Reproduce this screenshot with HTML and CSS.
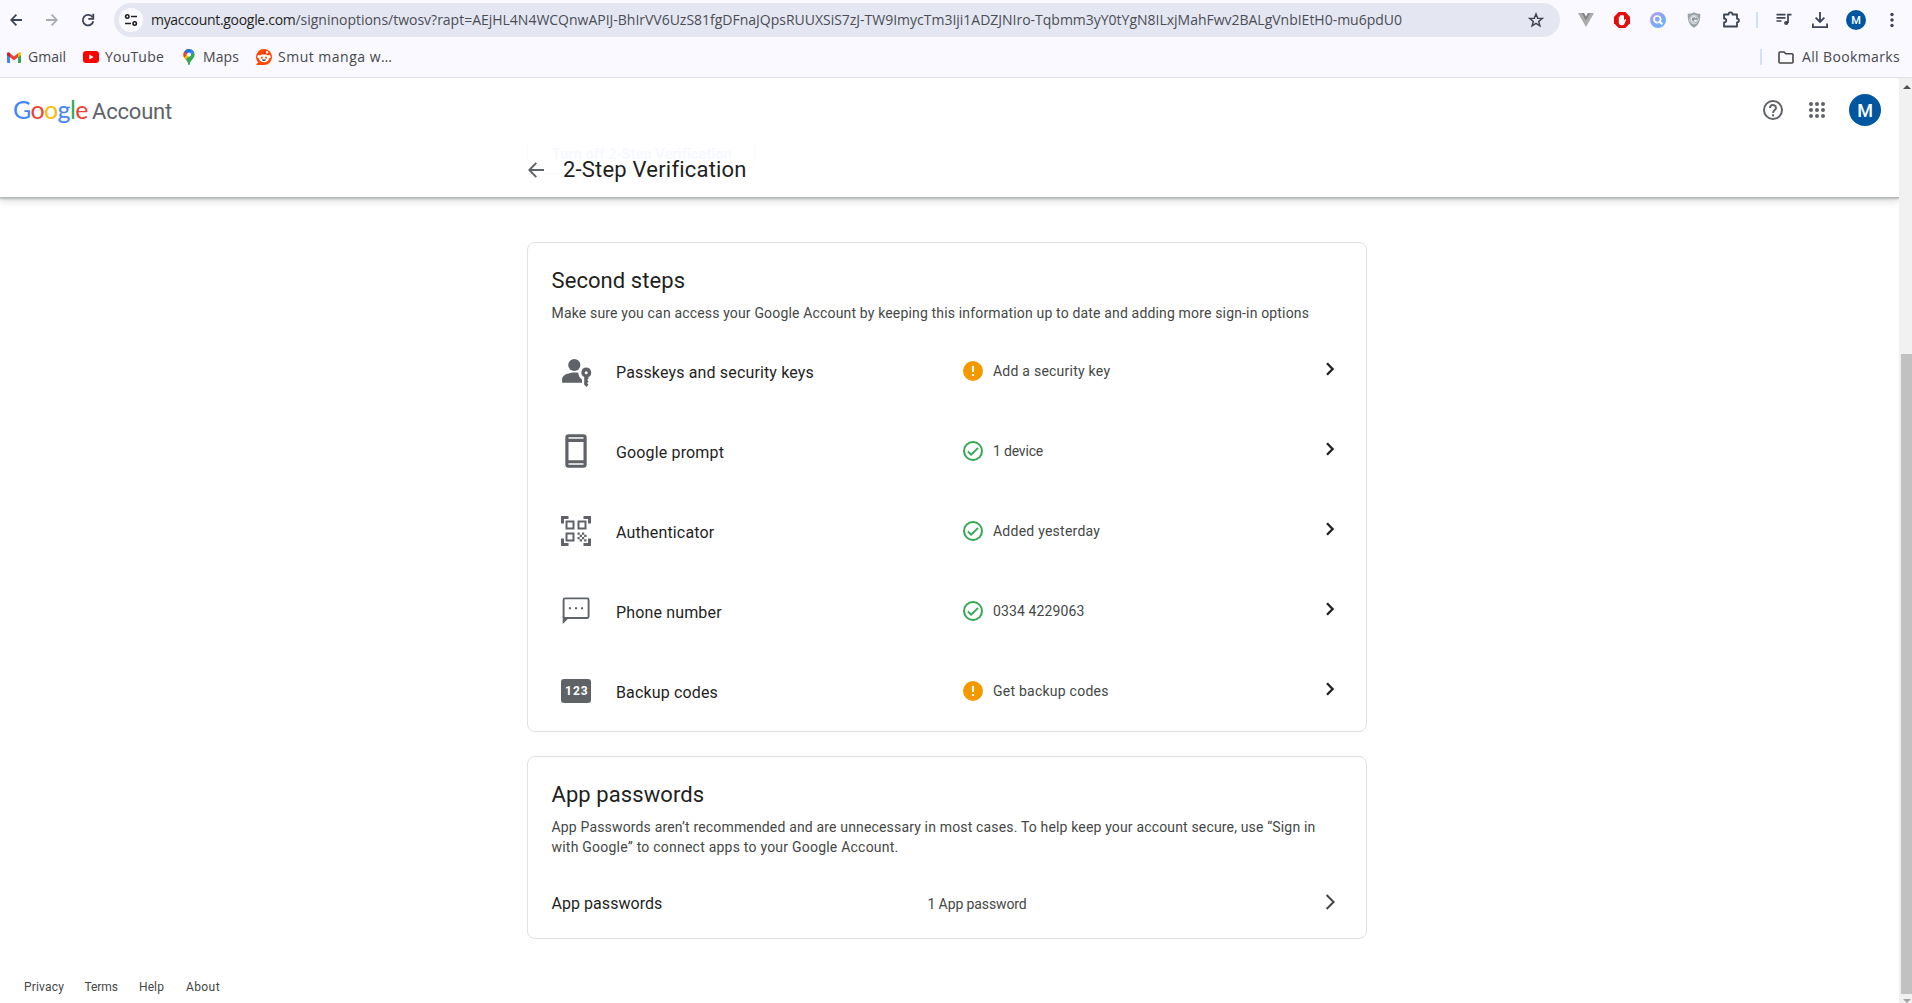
FILE: index.html
```html
<!DOCTYPE html>
<html lang="en">
<head>
<meta charset="utf-8">
<title>2-Step Verification</title>
<link rel="stylesheet" href="styles.css">
</head>
<body>
<svg class="defs" width="0" height="0" aria-hidden="true">
  <defs>
    <symbol id="warn" viewBox="0 0 20 20"><circle cx="10" cy="10" r="10" fill="#f29900"/><path d="M9 5h2v6H9zM9 13h2v2H9z" fill="#fff"/></symbol>
    <symbol id="ok" viewBox="0 0 20 20"><circle cx="10" cy="10" r="9" fill="none" stroke="#34a853" stroke-width="2"/><path d="M4.9 10.4l3.3 3.3 6.9-6.9" fill="none" stroke="#34a853" stroke-width="1.9"/></symbol>
    <symbol id="chev" viewBox="0 0 12 16"><path d="M3 2.2l5.6 5.8L3 13.8" fill="none" stroke="#202124" stroke-width="2.3"/></symbol>
  </defs>
</svg>

<div class="browser">
  <div class="toolbar">
    <svg class="nav" width="96" height="24" viewBox="0 0 96 24" fill="none" stroke-width="1.8">
      <path d="M12 12H1.4M6.4 6.6L1.2 12l5.2 5.4" stroke="#3c4356"/>
      <path d="M36 12h10.600M41.600 6.600L46.800 12l-5.200 5.400" stroke="#a9abb3"/>
      <path d="M82.600 9.300A5.300 5.300 0 1 0 83.300 13.200" stroke="#3c4356"/><path d="M83.300 5.800v5h-5" stroke="#3c4356"/>
    </svg>
    <div class="omnibox">
      <span class="tune"><svg width="14" height="14" viewBox="0 0 14 14" fill="none" stroke="#1f2026" stroke-width="1.6"><circle cx="3.300" cy="3.500" r="1.700"/><path d="M7 3.500h6M1 10.500h6"/><circle cx="10.700" cy="10.500" r="1.700"/></svg></span>
      <span class="url"><span class="host">myaccount.google.com</span><span class="path">/signinoptions/twosv?rapt=AEjHL4N4WCQnwAPIJ-BhIrVV6UzS81fgDFnaJQpsRUUXSiS7zJ-TW9ImycTm3Iji1ADZJNIro-Tqbmm3yY0tYgN8ILxjMahFwv2BALgVnbIEtH0-mu6pdU0</span></span>
      <svg class="star" width="16" height="16" viewBox="0 0 16 16"><path d="M8 2l1.700 4.200 4.500.3-3.500 2.900 1.200 4.400L8 11.400l-3.900 2.400 1.200-4.400L1.800 6.500l4.500-.3z" fill="none" stroke="#43454f" stroke-width="1.500"/></svg>
    </div>
    <div class="tools">
      <svg width="16" height="16" viewBox="0 0 16 16"><path d="M0 1h3.300L8 9.200 12.700 1H16L8 15z" fill="#ababab"/><path d="M3.300 1H6l2 3.400L10 1h2.700L8 9.200z" fill="#858585"/></svg>
      <svg width="16" height="16" viewBox="0 0 16 16"><path d="M4.700 0h6.600L16 4.700v6.600L11.300 16H4.700L0 11.300V4.700z" fill="#e40d0d"/><path d="M4.800 8V5c0-.8 1.200-.8 1.200 0V4c0-.9 1.300-.9 1.300 0v-.5c0-1 1.400-1 1.400 0V4c0-.9 1.300-.9 1.300 0v4.500l1-1.200c.6-.6 1.400 0 1.100.7L10.300 12c-.4.800-1 1.200-2 1.200H7.500c-1.700 0-2.700-1.200-2.700-2.700z" fill="#fff"/></svg>
      <svg width="16" height="16" viewBox="0 0 16 16"><defs><linearGradient id="lens" x1="0" y1="0" x2="1" y2="1"><stop offset="0" stop-color="#c59cf5"/><stop offset=".5" stop-color="#83a8f8"/><stop offset="1" stop-color="#5bb8fa"/></linearGradient></defs><circle cx="8" cy="8" r="8" fill="url(#lens)"/><circle cx="7.300" cy="7.300" r="3.300" fill="none" stroke="#fff" stroke-width="1.700"/><path d="M9.700 9.700l2.600 2.600" stroke="#fff" stroke-width="2"/></svg>
      <svg width="16" height="16" viewBox="0 0 16 16"><path d="M8 .2c2 1.200 4 1.400 6.300 1.500 0 6-.8 11-6.300 14.100C2.500 12.700 1.700 7.700 1.700 1.700 4 1.600 6 1.400 8 .2z" fill="#9ba1a8"/><circle cx="8" cy="7.500" r="4.300" fill="#8e949d" stroke="#dfe2e5"/><path d="M10.300 5.800a2.800 2.800 0 1 0 .3 2.500H8" fill="none" stroke="#edf0f2" stroke-width="1.200"/></svg>
      <svg width="18" height="18" viewBox="0 0 18 18"><path d="M2 3.500h4.500c0-2.800 4-2.800 4 0H15v4.200c2.500.1 2.500 3.500 0 3.600v4.200H2v-4c3-.3 3-3.700 0-4z" fill="none" stroke="#3c4356" stroke-width="1.800" stroke-linejoin="round"/></svg>
      <i class="bar"></i>
      <svg class="media" width="16" height="16" viewBox="0 0 16 16" fill="none" stroke="#3c4356" stroke-width="1.700"><path d="M.500 2.700h9M.500 5.800h9M.500 9h5"/><path d="M12 11V2.700h3.500"/><circle cx="10.200" cy="11" r="2.100" fill="#3c4356" stroke="none"/></svg>
      <svg width="16" height="16" viewBox="0 0 16 16" fill="none" stroke="#3c4356" stroke-width="1.800"><path d="M8 0v9.500M3.600 5.600L8 10l4.400-4.400M.9 11.500v3.600h14.200v-3.600"/></svg>
      <span class="mini">M</span>
      <svg class="more" width="6" height="16" viewBox="0 0 6 16" fill="#3c4356"><circle cx="3" cy="2.500" r="1.700"/><circle cx="3" cy="8" r="1.700"/><circle cx="3" cy="13.500" r="1.700"/></svg>
    </div>
  </div>
  <div class="bookmarks">
    <a class="bm gmail"><svg width="14" height="11" viewBox="0 0 14 11"><path d="M0 1.500h3V11H1a1 1 0 0 1-1-1z" fill="#4285f4"/><path d="M11 1.500h3V10a1 1 0 0 1-1 1h-2z" fill="#34a853"/><path d="M3 1.300L7 4.400l4-3.100v4L7 8.400 3 5.300z" fill="#ea4335"/><path d="M0 2C0 .2 1.700-.3 3 .9V5.300L0 3.200z" fill="#c5221f"/><path d="M14 2c0-1.800-1.700-2.300-3-1.100v4.400l3-2.100z" fill="#fbbc04"/></svg><span>Gmail</span></a>
    <a class="bm yt"><svg width="16" height="12" viewBox="0 0 16 12"><rect width="16" height="12" rx="3" fill="#f00"/><path d="M6.300 3.500L10.700 6 6.300 8.500z" fill="#fff"/></svg><span>YouTube</span></a>
    <a class="bm maps"><svg width="12" height="16" viewBox="0 0 12 16"><defs><clipPath id="pin"><path d="M6 0a5.600 5.600 0 0 1 5.600 5.600C11.600 9.800 7.500 11 6.700 15.400c-.2.800-1.200.8-1.400 0C4.500 11 .4 9.800.4 5.600A5.600 5.600 0 0 1 6 0z"/></clipPath></defs><g clip-path="url(#pin)"><path d="M0 0h12v16H0z" fill="#34a853"/><path d="M0 0h12L3.500 10 0 12z" fill="#fbbc04"/><path d="M0 0h7L2.500 7.500 0 9z" fill="#ea4335"/><path d="M2 0h10v3L6 6 1.700 2.400z" fill="#1a73e8"/><path d="M8.500.5L12 3 7 6z" fill="#4285f4"/></g><circle cx="6" cy="5.600" r="2.100" fill="#fff"/></svg><span>Maps</span></a>
    <a class="bm reddit"><svg width="16" height="16" viewBox="0 0 16 16"><path d="M8 0a8 8 0 1 1 0 16H.8c-.5 0-.7-.6-.3-.9L2.300 13.500A8 8 0 0 1 8 0z" fill="#ff4500"/><circle cx="2.900" cy="7.600" r="1.600" fill="#fff"/><circle cx="13.100" cy="7.600" r="1.600" fill="#fff"/><ellipse cx="8" cy="9.200" rx="5.100" ry="4" fill="#fff"/><circle cx="11" cy="3.300" r="1.200" fill="#fff"/><path d="M8 5.500c0-1.500.8-2.300 2.200-2.300" fill="none" stroke="#842123" stroke-width=".7"/><ellipse cx="5.900" cy="8.700" rx=".9" ry="1.100" fill="#ff4500"/><ellipse cx="10.100" cy="8.700" rx=".9" ry="1.100" fill="#ff4500"/><path d="M5.900 10.600h4.200c-.5 1.900-3.700 1.900-4.200 0z" fill="#1c2a33"/></svg><span>Smut manga w…</span></a>
    <a class="bm all"><i class="bar"></i><svg width="16" height="13" viewBox="0 0 16 13"><path d="M1 2.200C1 1.400 1.400 1 2 1h4l1.800 1.800H14c.6 0 1 .4 1 1V11c0 .6-.4 1-1 1H2c-.6 0-1-.4-1-1z" fill="none" stroke="#474747" stroke-width="1.600"/></svg><span>All Bookmarks</span></a>
  </div>
</div>

<div class="viewport">
  <div class="page">
    <header class="header">
      <div class="topbar">
        <div class="brand"><span class="logo"><span class="b">G</span><span class="r">o</span><span class="y">o</span><span class="b">g</span><span class="g">l</span><span class="r">e</span></span><span class="product">Account</span></div>
        <div class="actions">
          <svg width="20" height="20" viewBox="0 0 20 20"><circle cx="10" cy="10" r="9" fill="none" stroke="#5f6368" stroke-width="2"/><path d="M7 8c0-4 6-4 6-.1 0 2-3 2.300-3 5" fill="none" stroke="#5f6368" stroke-width="1.900"/><path d="M9 14.200h2v2H9z" fill="#5f6368"/></svg>
          <svg width="16" height="16" viewBox="0 0 16 16" fill="#5f6368"><circle cx="2" cy="2" r="2"/><circle cx="8" cy="2" r="2"/><circle cx="14" cy="2" r="2"/><circle cx="2" cy="8" r="2"/><circle cx="8" cy="8" r="2"/><circle cx="14" cy="8" r="2"/><circle cx="2" cy="14" r="2"/><circle cx="8" cy="14" r="2"/><circle cx="14" cy="14" r="2"/></svg>
          <span class="avatar">M</span>
        </div>
      </div>
      <div class="titlebar">
        <span class="ghost">Turn off 2-Step Verification</span>
        <svg width="16" height="16" viewBox="0 0 16 16"><path d="M16 8H1.500M8.300.8L1.300 8l7 7.200" fill="none" stroke="#5f6368" stroke-width="1.900"/></svg>
        <h1>2-Step Verification</h1>
      </div>
    </header>

    <main class="content">
      <section class="card steps">
        <h2>Second steps</h2>
        <p>Make sure you can access your Google Account by keeping this information up to date and adding more sign-in options</p>
        <div class="row">
          <svg class="ico" viewBox="0 0 32 40" fill="#5f6368"><circle cx="14.300" cy="13" r="6.100"/><path d="M2.100 30.800v-3.600c0-4.700 7.500-6.700 12.500-6.700 1.300 0 2.500.1 3.700.3.200 3 1.500 5.300 3.700 6.800v3.200z"/><path fill-rule="evenodd" d="M26.200 15.600a5 5 0 0 1 2.200 9.500v1.300l-1.200 1.500 1.400 1.500-1.500 1.700 1.300 1.500-1.800 2.400-2.400-2.300v-7.600a5 5 0 0 1 2-9.500zm0 3.600a1.500 1.500 0 1 0 0 3 1.500 1.500 0 0 0 0-3z"/></svg>
          <span class="name">Passkeys and security keys</span>
          <span class="status"><svg><use href="#warn"/></svg>Add a security key</span>
          <svg class="chev"><use href="#chev"/></svg>
        </div>
        <div class="row">
          <svg class="ico" viewBox="0 0 32 40"><path fill="#5f6368" fill-rule="evenodd" d="M8.300 2.300h15.400c1.800 0 3 1.200 3 3v27.400c0 1.800-1.200 3-3 3H8.300c-1.800 0-3-1.200-3-3V5.300c0-1.800 1.200-3 3-3zM8.500 5.300v1.500h15V5.300zM8.500 9.900v18.400h15V9.900zM8.500 31.300v1.500h15v-1.500z"/></svg>
          <span class="name">Google prompt</span>
          <span class="status tight"><svg><use href="#ok"/></svg>1 device</span>
          <svg class="chev"><use href="#chev"/></svg>
        </div>
        <div class="row">
          <svg class="ico" viewBox="0 0 32 40"><g fill="none" stroke="#5f6368"><path stroke-width="3" d="M8.500 5.500h-6v6M23.500 5.500h6v6M8.500 32.500h-6v-6M23.500 32.500h6v-6"/><path stroke-width="2" d="M6.500 9.500h7v7h-7zM18.500 9.500h7v7h-7zM6.500 21.500h7v7h-7z"/></g><path fill="#5f6368" d="M17.500 20.500h2.200v2.200h-2.200zM22 20.500h2.200v2.200H22zM19.700 22.700h2.300v2.200h-2.300zM24.200 22.700h2.300v2.200h-2.300zM17.500 24.900h2.200v2.300h-2.200zM22 24.900h2.200v2.300H22zM19.700 27.200h2.300v2.300h-2.300zM24.200 27.200h2.300v2.300h-2.300z"/></svg>
          <span class="name">Authenticator</span>
          <span class="status"><svg><use href="#ok"/></svg>Added yesterday</span>
          <svg class="chev"><use href="#chev"/></svg>
        </div>
        <div class="row">
          <svg class="ico" viewBox="0 0 32 40" fill="#5f6368"><rect x="3.600" y="6.400" width="25" height="19.600" rx="1.500" fill="none" stroke="#5f6368" stroke-width="1.900"/><path d="M2.700 24v8l5.400-5.200z"/><path d="M8.900 15.200h2.100v2.100H8.900zM15 15.200h2.100v2.100H15zM21 15.200h2.100v2.100H21z"/></svg>
          <span class="name">Phone number</span>
          <span class="status number"><svg><use href="#ok"/></svg>0334 4229063</span>
          <svg class="chev"><use href="#chev"/></svg>
        </div>
        <div class="row">
          <svg class="ico" viewBox="0 0 32 40"><rect x="1" y="7" width="30" height="24" rx="3" fill="#5f6368"/><text class="digits" x="5" y="23.300">123</text></svg>
          <span class="name">Backup codes</span>
          <span class="status"><svg><use href="#warn"/></svg>Get backup codes</span>
          <svg class="chev"><use href="#chev"/></svg>
        </div>
      </section>

      <section class="card apps">
        <h2>App passwords</h2>
        <p>App Passwords aren’t recommended and are unnecessary in most cases. To help keep your account secure, use “Sign in<br><span class="second">with Google” to connect apps to your Google Account.</span></p>
        <div class="approw">
          <span class="name">App passwords</span>
          <span class="count">1 App password</span>
          <svg class="chev" viewBox="0 0 12 20"><path d="M2.600 3l7 7-7 7" fill="none" stroke="#444746" stroke-width="2"/></svg>
        </div>
      </section>
    </main>

    <footer class="footer"><a class="privacy">Privacy</a><a class="terms">Terms</a><a class="help">Help</a><a class="about">About</a></footer>
  </div>
  <div class="scrollbar"><i class="up"></i><i class="thumb"></i><i class="down"></i></div>
</div>
</body>
</html>
```
FILE: styles.css
```css
* { box-sizing: border-box; }
body { margin: 0; width: 1912px; height: 1003px; overflow: hidden; display: flex; flex-direction: column; background: #fff; color: #1f1f1f; font-family: Roboto, sans-serif; }
svg { display: block; flex: none; }
.defs { position: absolute; }
h1, h2, p { margin: 0; font-weight: 400; }

/* Browser chrome */
.browser { height: 78px; flex: none; background: #f9f9ff; border-bottom: 1px solid #dfe0ee; font-family: "Open Sans", sans-serif; font-size: 14px; }
.toolbar { display: flex; align-items: center; height: 40px; padding: 0 17px 0 10px; }
.nav { margin-right: 8px; }
.omnibox { display: flex; align-items: center; width: 1446px; height: 34px; padding: 0 16px 0 5px; border-radius: 17px; background: #e4e7f2; }
.tune { display: grid; place-items: center; width: 24px; height: 24px; margin-right: 8px; border-radius: 50%; background: #fafaff; }
.url { flex: 1; white-space: nowrap; line-height: 20px; }
.host { color: #1f1f23; letter-spacing: -0.31px; }
.path { color: #4b4d55; letter-spacing: -0.012px; }
.tools { display: flex; align-items: center; flex: 1; gap: 20px; padding-left: 18px; }
.bar { width: 2px; height: 16px; background: #d3e0fb; }
.tools .bar { margin-left: -4px; }
.media, .mini { margin-left: -2px; }
.more { margin-left: 3px; }
.mini, .avatar { display: grid; place-items: center; border-radius: 50%; background: #00579f; color: #fff; font-family: Roboto, sans-serif; font-weight: 500; }
.mini { width: 20px; height: 20px; font-size: 11px; }
.bookmarks { display: flex; align-items: center; height: 34px; padding: 0 12px 0 7px; color: #46474c; letter-spacing: .2px; }
.bm { display: flex; align-items: center; gap: 7px; }
.bm span { padding-bottom: 2px; }
.gmail { width: 76px; letter-spacing: 0; gap: 7px; }
.yt { width: 100px; gap: 6px; }
.maps { width: 73px; gap: 8px; letter-spacing: .1px; }
.reddit { gap: 6px; letter-spacing: .5px; }
.all { margin-left: auto; gap: 8px; letter-spacing: .36px; }
.all .bar { margin-right: 8px; }

/* Page */
.viewport { display: flex; flex: 1; min-height: 0; }
.page { width: 1899px; display: flex; flex-direction: column; }
.header { height: 119px; flex: none; box-shadow: 0 1px 1px #b4b7b9, 0 2px 2px #bdc0c1, 0 3px 8px rgba(60, 64, 67, .24); clip-path: inset(0 0 -20px 0); }
.topbar { display: flex; justify-content: space-between; align-items: center; height: 64px; padding: 0 18px 0 13px; }
.brand { display: flex; align-items: baseline; padding-bottom: 2px; }
.logo { width: 79px; font-family: Lato, sans-serif; font-size: 25px; letter-spacing: -.6px; }
.b { color: #4285f4; }
.r { color: #ea4335; }
.y { color: #fbbc04; }
.g { color: #34a853; }
.product { color: #5f6368; font-size: 22px; letter-spacing: -.2px; }
.actions { display: flex; align-items: center; }
.actions svg:first-child { margin-right: 26px; }
.avatar { width: 32px; height: 32px; margin-left: 24px; font-size: 18px; }
.titlebar { position: relative; display: flex; align-items: center; height: 55px; margin-left: 528px; gap: 19px; }
.titlebar h1 { font-size: 22px; line-height: 28px; letter-spacing: .2px; }
.titlebar > svg, .titlebar h1 { margin-top: 1px; position: relative; }
/* Button that has scrolled beneath the translucent header */
.ghost { position: absolute; left: -1px; top: 0; width: 228px; height: 32px; padding-left: 24px; border: 1px solid #fbfbfc; border-top: 0; border-radius: 4px 4px 18px 18px; color: #f5f8fe; font-size: 14px; line-height: 24px; font-weight: 500; letter-spacing: .35px; }

.content { width: 840px; margin: 45px 0 0 527px; display: flex; flex-direction: column; gap: 24px; }
.card { border: 1px solid #dfe1e3; border-radius: 8px; padding: 24px 24px 0 23.5px; }
.card h2 { font-size: 22px; line-height: 28px; letter-spacing: .08px; }
.card p { margin-top: 8px; color: #444746; font-size: 14px; line-height: 20px; letter-spacing: .162px; white-space: nowrap; }
.second { letter-spacing: .225px; }
.steps { height: 490px; }
.row { display: grid; grid-template-columns: 32px 347px 1fr 12px; column-gap: 24px; align-items: center; height: 64px; margin-bottom: 16px; padding: 0 6px 0 8.5px; }
.steps p + .row { margin-top: 17px; }
.row .name { font-size: 16px; letter-spacing: .15px; }
.row .status { margin-left: -24px; }
.ico { width: 32px; height: 40px; }
.digits { fill: #fff; font: 700 12px Roboto, sans-serif; letter-spacing: 1px; }
.status { display: flex; align-items: center; gap: 10px; color: #444746; font-size: 14px; letter-spacing: .24px; margin-top: -2px; }
.status svg { width: 20px; height: 20px; }
.tight { letter-spacing: -.18px; }
.number { letter-spacing: .12px; }
.row .chev { width: 12px; height: 16px; margin-top: -6px; }
.apps { height: 183px; }
.approw { display: grid; grid-template-columns: 376px 1fr 12px; align-items: center; height: 40px; margin-top: 26px; padding-right: 6px; }
.approw .name { font-size: 16px; letter-spacing: .05px; }
.count { color: #444746; font-size: 14px; letter-spacing: -.11px; padding-top: 2px; }
.approw .chev { width: 12px; height: 20px; margin-top: -2px; }

.footer { display: flex; margin-top: 40px; padding-left: 24px; color: #444746; font-size: 12px; line-height: 16px; letter-spacing: .1px; }
.privacy { width: 60.5px; letter-spacing: .18px; }
.terms { width: 54.5px; letter-spacing: -.1px; }
.help { width: 47px; }
.about { letter-spacing: .4px; }

/* Scrollbar */
.scrollbar { width: 13px; background: #f1f1f1; padding: 7px 0 0 2px; display: flex; flex-direction: column; }
.up { width: 0; height: 0; margin-left: 2px; border: 4px solid transparent; border-top: 0; border-bottom-color: #505050; }
.thumb { height: 641px; margin-top: 265px; background: #c1c1c1; }
.down { width: 0; height: 0; margin: 5px 0 0 2px; border: 4px solid transparent; border-bottom: 0; border-top-color: #a3a3a3; }
```
